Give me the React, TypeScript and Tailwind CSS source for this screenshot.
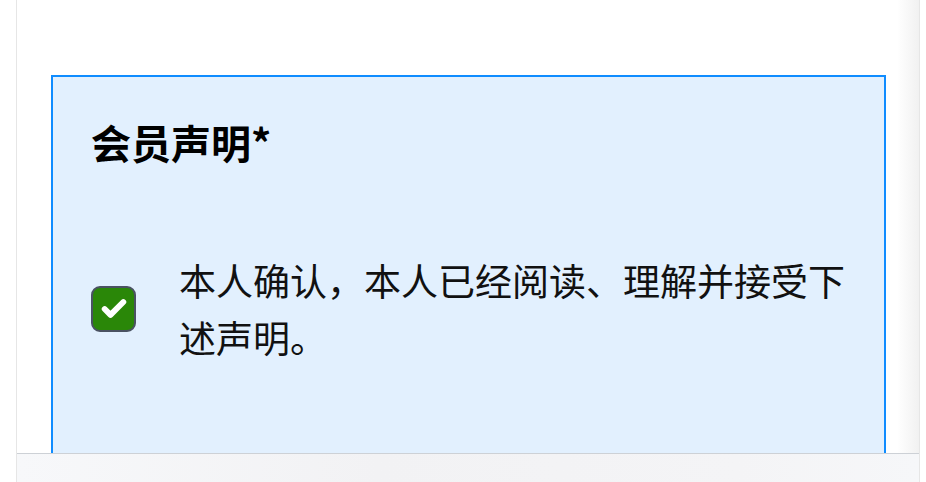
import { Check } from "lucide-react";

export default function App() {
  return (
    <div
      className="w-[926px] h-[482px] bg-white overflow-hidden"
      style={{ fontFamily: '"Noto Sans CJK SC", "Noto Sans", sans-serif' }}
    >
      <div className="ml-[16px] w-[904px] h-full border-l border-r border-[#e6e6e6] flex flex-col bg-[linear-gradient(to_right,#ffffff_0,#ffffff_880px,#f1f1f1_100%)]">
        {/* content */}
        <div className="flex-1 min-h-0 pt-[75px] pl-[34px] pr-[33px]">
          <div className="h-full border-2 border-b-0 border-[#0f8cff] bg-[#e2f0fe] pt-[41px] pl-[38px] pr-[24px]">
            <h2 className="text-[40px] leading-[48px] font-bold text-black">会员声明*</h2>

            <div className="mt-[86px] flex items-center gap-[43px]">
              <div className="w-[45px] h-[46px] shrink-0 rounded-[9px] border-2 border-[#4a5262] bg-[#2a8708] flex items-center justify-center">
                <Check className="w-[28px] h-[28px] text-white" strokeWidth={5} />
              </div>
              <p className="text-[37px] leading-[57px] text-[#111]">
                本人确认，本人已经阅读、理解并接受下述声明。
              </p>
            </div>
          </div>
        </div>

        {/* bottom bar */}
        <div className="h-[29px] shrink-0 border-t border-[#cdd1d6] bg-[linear-gradient(to_right,#f7f8fa,#f2f2f4_40%,#f4f4f6_80%,#f6f7f9)]" />
      </div>
    </div>
  );
}
